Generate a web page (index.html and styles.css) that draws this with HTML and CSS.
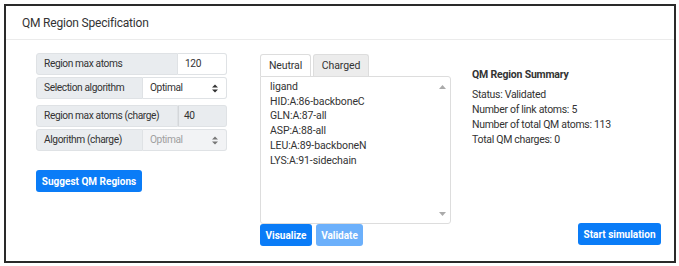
FILE: index.html
```html
<!DOCTYPE html>
<html>
<head>
<meta charset="utf-8">
<link rel="stylesheet" href="styles.css">
</head>
<body>
<div class="frame">
  <div class="card-header">QM Region Specification</div>
  <div class="card-body">
    <div class="col-left">
      <div class="group">
        <div class="row">
          <div class="label w1">Region max atoms</div>
          <div class="input">120</div>
        </div>
        <div class="row">
          <div class="label w2">Selection algorithm</div>
          <div class="select">Optimal<span class="caret"><svg width="6" height="9" viewBox="0 0 6 9"><path d="M0 3.5L3 0.5L6 3.5Z M0 5.5L3 8.5L6 5.5Z" fill="#333"/></svg></span></div>
        </div>
      </div>
      <div class="group">
        <div class="row">
          <div class="label w1 joined">Region max atoms (charge)</div>
          <div class="input disabled">40</div>
        </div>
        <div class="row">
          <div class="label w2">Algorithm (charge)</div>
          <div class="select disabled">Optimal<span class="caret"><svg width="6" height="9" viewBox="0 0 6 9"><path d="M0 3.5L3 0.5L6 3.5Z M0 5.5L3 8.5L6 5.5Z" fill="#777"/></svg></span></div>
        </div>
      </div>
      <button class="btn suggest">Suggest QM Regions</button>
    </div>
    <div class="col-mid">
      <div class="tabs">
        <div class="tab active">Neutral</div>
        <div class="tab second">Charged</div>
      </div>
      <div class="textarea">
        <div class="lines">
          <div>ligand</div>
          <div>HID:A:86-backboneC</div>
          <div>GLN:A:87-all</div>
          <div>ASP:A:88-all</div>
          <div>LEU:A:89-backboneN</div>
          <div>LYS:A:91-sidechain</div>
        </div>
        <div class="scroll">
          <svg width="7" height="5" viewBox="0 0 7 5"><path d="M0 5L3.5 1L7 5Z" fill="#aaa"/></svg>
          <svg width="7" height="5" viewBox="0 0 7 5"><path d="M0 0L3.5 4L7 0Z" fill="#aaa"/></svg>
        </div>
      </div>
      <div class="btns">
        <button class="btn vis">Visualize</button>
        <button class="btn faded">Validate</button>
      </div>
    </div>
    <div class="col-right">
      <div class="summary">
        <div class="sum-title">QM Region Summary</div>
        <div>Status: Validated</div>
        <div>Number of link atoms: 5</div>
        <div>Number of total QM atoms: 113</div>
        <div>Total QM charges: 0</div>
      </div>
      <button class="btn start">Start simulation</button>
    </div>
  </div>
</div>
</body>
</html>
```
FILE: styles.css
```css
html, body {
  margin: 0;
  padding: 0;
  background: #fff;
}
body {
  padding: 4px 3px 3px 4px;
  font-family: Roboto, "Liberation Sans", sans-serif;
  color: #333;
}
.frame {
  width: 668px;
  height: 255px;
  border: 2px solid #2a2a2a;
  box-sizing: content-box;
}
.card-header {
  height: 33px;
  border-bottom: 1px solid #ebebeb;
  padding-left: 16px;
  font-size: 12px;
  letter-spacing: -0.2px;
  line-height: 35px;
  color: #333;
}
.card-body {
  display: flex;
  padding: 13px 0 0 30px;
}
.col-left {
  width: 191px;
  display: flex;
  flex-direction: column;
}
.group {
  display: flex;
  flex-direction: column;
  gap: 2px;
  margin-bottom: 6px;
}
.row {
  display: flex;
  height: 22px;
  font-size: 10.2px;
  letter-spacing: -0.4px;
  line-height: 20px;
}
.label {
  background: #e9ecef;
  border: 1px solid #dfe2e5;
  border-radius: 3px 0 0 3px;
  padding-left: 7px;
  box-sizing: border-box;
  color: #333;
  white-space: nowrap;
}
.w1 { width: 142px; }
.w2 { width: 107px; }
.input, .select {
  flex: 1;
  border: 1px solid #dfe2e5;
  border-left: none;
  border-radius: 0 3px 3px 0;
  box-sizing: border-box;
  background: #fff;
  padding-left: 7px;
  line-height: 20px;
}
.select {
  display: flex;
  justify-content: space-between;
  align-items: center;
  padding-right: 8px;
}
.caret { display: flex; align-items: center; }
.input.disabled {
  background: #e9ecef;
  border-left: 1px solid #d4d7da;
  padding-left: 5px;
}
.select.disabled {
  background: #f2f3f5;
  color: #a0a0a0;
}
.btn {
  font-family: Roboto, "Liberation Sans", sans-serif;
  background: #0a7cf7;
  color: #fff;
  border: none;
  border-radius: 3px;
  font-size: 10px;
  font-weight: 700;
  height: 22px;
  padding: 0;
  white-space: nowrap;
  cursor: pointer;
}
.suggest {
  margin-top: 13px;
  width: 106px;
  align-self: flex-start;
}
.col-mid {
  margin-left: 33px;
  width: 191px;
  display: flex;
  flex-direction: column;
}
.tabs {
  display: flex;
  gap: 2px;
  height: 22px;
  margin-top: 1px;
}
.tab {
  font-size: 10.5px;
  letter-spacing: -0.1px;
  line-height: 21px;
  text-align: center;
  border: 1px solid #ddd;
  border-bottom: none;
  border-radius: 3px 3px 0 0;
  background: #ececec;
  color: #333;
  box-sizing: border-box;
}
.tab.active {
  background: #fff;
  width: 51px;
}
.tab.second { width: 56px; }
.textarea {
  height: 148px;
  border: 1px solid #ddd;
  border-radius: 0 3px 3px 3px;
  display: flex;
  justify-content: space-between;
  box-sizing: border-box;
}
.lines {
  padding: 3px 0 0 9px;
  font-size: 10.5px;
  letter-spacing: -0.1px;
  line-height: 14.7px;
  color: #333;
}
.scroll {
  width: 12px;
  display: flex;
  flex-direction: column;
  justify-content: space-between;
  align-items: center;
  padding: 7px 2px 6px 0;
}
.btns {
  display: flex;
  gap: 4px;
}
.vis { width: 52px; }
.faded { width: 47px; background: #6cb0fb; }
.col-right {
  margin-left: 21px;
  width: 190px;
  display: flex;
  flex-direction: column;
}
.summary {
  margin-top: 14px;
  font-size: 10.5px;
  letter-spacing: -0.3px;
  line-height: 15px;
  color: #333;
}
.sum-title {
  font-weight: 700;
  letter-spacing: -0.2px;
  margin-bottom: 5px;
}
.start {
  margin-top: 76px;
  align-self: flex-end;
  width: 83px;
  margin-right: 1px;
}
```
